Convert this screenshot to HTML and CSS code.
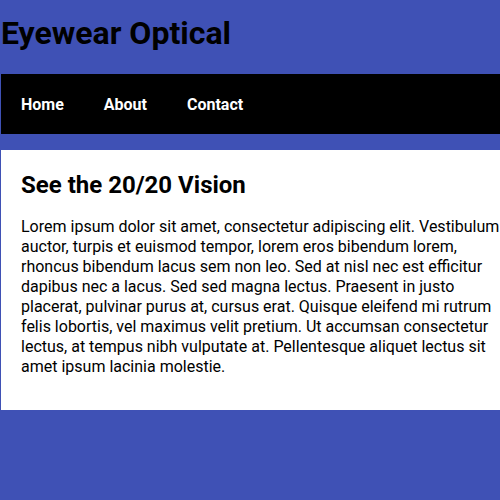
FILE: index.html
```html
<!DOCTYPE html>
<html lang="en">
<head>
<meta charset="utf-8">
<title>Eyewear Optical</title>
<link rel="stylesheet" href="styles.css">
</head>
<body>
<header class="site-header">
  <h1 class="site-title">Eyewear Optical</h1>
</header>
<nav class="main-nav">
  <a href="#" class="nav-link">Home</a>
  <a href="#" class="nav-link">About</a>
  <a href="#" class="nav-link">Contact</a>
</nav>
<section class="content">
  <h2 class="content-title">See the 20/20 Vision</h2>
  <p class="content-text">Lorem ipsum dolor sit amet, consectetur adipiscing elit. Vestibulum auctor, turpis et euismod tempor, lorem eros bibendum lorem, rhoncus bibendum lacus sem non leo. Sed at nisl nec est efficitur dapibus nec a lacus. Sed sed magna lectus. Praesent in justo placerat, pulvinar purus at, cursus erat. Quisque eleifend mi rutrum felis lobortis, vel maximus velit pretium. Ut accumsan consectetur lectus, at tempus nibh vulputate at. Pellentesque aliquet lectus sit amet ipsum lacinia molestie.</p>
</section>
</body>
</html>
```
FILE: styles.css
```css
html, body {
  margin: 0;
  padding: 0;
  overflow: hidden;
}
body {
  background: #3f51b5;
  font-family: Roboto, "Liberation Sans", sans-serif;
  color: #000;
  height: 500px;
}
.site-header {
  padding: 15px 0 0 1px;
  height: 74px;
  box-sizing: border-box;
}
.site-title {
  margin: 0;
  font-size: 32px;
  font-weight: 700;
  line-height: 37px;
}
.main-nav {
  display: flex;
  margin-left: 1px;
  background: #000;
  height: 60px;
  box-sizing: border-box;
  padding-top: 1px;
  align-items: center;
}
.nav-link {
  color: #fff;
  font-weight: 700;
  font-size: 16px;
  text-decoration: none;
  padding: 0 20px;
  line-height: 20px;
}
.content {
  margin: 16px 0 0 1px;
  background: #fff;
  padding: 21px 0 33px 20px;
}
.content-title {
  margin: 0 0 18px;
  font-size: 24px;
  font-weight: 700;
  line-height: 28px;
}
.content-text {
  margin: 0;
  font-size: 16px;
  line-height: 20px;
  width: 479px;
}
```
